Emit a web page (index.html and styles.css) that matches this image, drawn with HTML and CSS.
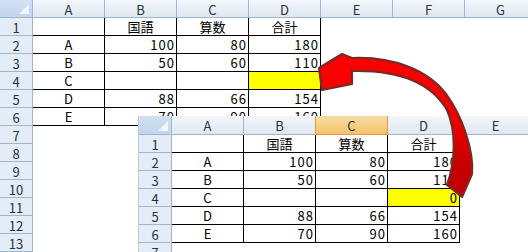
FILE: index.html
```html
<!DOCTYPE html>
<html lang="ja">
<head>
<meta charset="utf-8">
<link rel="stylesheet" href="styles.css">
</head>
<body>
<div class="desk">
  <div class="sheet sheet1">
    <div class="corner"></div>
    <div class="ch">A</div><div class="ch">B</div><div class="ch">C</div><div class="ch">D</div><div class="ch">E</div><div class="ch">F</div><div class="ch">G</div>

    <div class="rh">1</div>
    <div class="c b"></div><div class="c b ctr">国語</div><div class="c b ctr">算数</div><div class="c b ctr">合計</div><div class="c"></div><div class="c"></div><div class="c"></div>
    <div class="rh">2</div>
    <div class="c b ctr">A</div><div class="c b num">100</div><div class="c b num">80</div><div class="c b num">180</div><div class="c"></div><div class="c"></div><div class="c"></div>
    <div class="rh">3</div>
    <div class="c b ctr">B</div><div class="c b num">50</div><div class="c b num">60</div><div class="c b num">110</div><div class="c"></div><div class="c"></div><div class="c"></div>
    <div class="rh">4</div>
    <div class="c b ctr">C</div><div class="c b num"></div><div class="c b num"></div><div class="c b num y"></div><div class="c"></div><div class="c"></div><div class="c"></div>
    <div class="rh">5</div>
    <div class="c b ctr">D</div><div class="c b num">88</div><div class="c b num">66</div><div class="c b num">154</div><div class="c"></div><div class="c"></div><div class="c"></div>
    <div class="rh">6</div>
    <div class="c b ctr">E</div><div class="c b num">70</div><div class="c b num">90</div><div class="c b num">160</div><div class="c"></div><div class="c"></div><div class="c"></div>
    <div class="rh">7</div><div class="c blank"></div>
    <div class="rh">8</div><div class="c blank"></div>
    <div class="rh">9</div><div class="c blank"></div>
    <div class="rh">10</div><div class="c blank"></div>
    <div class="rh">11</div><div class="c blank"></div>
    <div class="rh">12</div><div class="c blank"></div>
    <div class="rh">13</div><div class="c blank"></div>
  </div>

  <div class="sheet sheet2">
    <div class="corner"></div>
    <div class="ch">A</div><div class="ch">B</div><div class="ch sel">C</div><div class="ch">D</div><div class="ch">E</div>

    <div class="rh">1</div>
    <div class="c b"></div><div class="c b ctr">国語</div><div class="c b ctr">算数</div><div class="c b ctr">合計</div><div class="c"></div>
    <div class="rh">2</div>
    <div class="c b ctr">A</div><div class="c b num">100</div><div class="c b num">80</div><div class="c b num">180</div><div class="c"></div>
    <div class="rh">3</div>
    <div class="c b ctr">B</div><div class="c b num">50</div><div class="c b num">60</div><div class="c b num">110</div><div class="c"></div>
    <div class="rh">4</div>
    <div class="c b ctr">C</div><div class="c b num"></div><div class="c b num"></div><div class="c b num y">0</div><div class="c"></div>
    <div class="rh">5</div>
    <div class="c b ctr">D</div><div class="c b num">88</div><div class="c b num">66</div><div class="c b num">154</div><div class="c"></div>
    <div class="rh">6</div>
    <div class="c b ctr">E</div><div class="c b num">70</div><div class="c b num">90</div><div class="c b num">160</div><div class="c"></div>
    <div class="rh">7</div><div class="c blank"></div>
  </div>

  <svg class="arrow" width="528" height="252" viewBox="0 0 528 252" aria-hidden="true">
    <defs>
      <linearGradient id="ag" x1="0" y1="0" x2="0" y2="1">
        <stop offset="0" stop-color="#ff0000"/>
        <stop offset="0.45" stop-color="#f00000"/>
        <stop offset="0.75" stop-color="#c80000"/>
        <stop offset="1" stop-color="#c00000"/>
      </linearGradient>
    </defs>
    <path d="M352 58 C392 56 428 70 446 94 C462 116 474 150 472 174 L462 197 L447 185 C456 160 456 130 447 110 C432 84 400 70 352 71 L352 84 L322 90 L319 68 L342 54 Z"
          fill="url(#ag)" stroke="#7a2a26" stroke-width="2.2" stroke-linejoin="round"/>
  </svg>
</div>
</body>
</html>
```

FILE: styles.css
```css
html, body {
  margin: 0;
  padding: 0;
  background: #ffffff;
}

.desk {
  position: relative;
  width: 528px;
  height: 252px;
  overflow: hidden;
  font-family: "Noto Sans CJK JP", "Noto Sans", sans-serif;
  font-size: 13px;
  color: #000;
}

.sheet {
  display: grid;
  background: #fff;
}

.sheet1 {
  grid-template-columns: 33px repeat(7, 72px);
  grid-template-rows: 18px repeat(13, 18px);
  width: 537px;
}

.sheet2 {
  position: absolute;
  left: 138px;
  top: 116px;
  grid-template-columns: 33px repeat(5, 72px);
  grid-template-rows: 19px repeat(7, 18px);
  width: 394px;
  border-left: 1px solid #b8c9dc;
  box-sizing: border-box;
}

.corner {
  position: relative;
  box-sizing: border-box;
  background: linear-gradient(#d2e0f2, #c2d5ee);
  border-right: 1px solid #9eb6ce;
  border-bottom: 1px solid #9eb6ce;
}

.corner::after {
  content: "";
  position: absolute;
  right: 3px;
  bottom: 3px;
  width: 0;
  height: 0;
  border-left: 10px solid transparent;
  border-bottom: 10px solid #f2f6fb;
}

.ch {
  box-sizing: border-box;
  background: linear-gradient(#f4f7fb, #dfe7f1);
  border-right: 1px solid #9eb6ce;
  border-bottom: 1px solid #9eb6ce;
  color: #26333e;
  display: flex;
  align-items: center;
  justify-content: center;
  line-height: 1;
  padding-top: 1px;
}

.ch.sel {
  background: linear-gradient(#f9dca4, #f2c46e);
  border-left: 1px solid #f29536;
  border-right: 1px solid #f29536;
  border-bottom: 1px solid #f29536;
  margin-left: -1px;
}

.rh {
  box-sizing: border-box;
  background: #e4ecf7;
  border-right: 1px solid #9eb6ce;
  border-bottom: 1px solid #9eb6ce;
  color: #26333e;
  text-align: center;
  line-height: 17px;
  padding-top: 1px;
}

.c {
  box-sizing: border-box;
  line-height: 17px;
  white-space: nowrap;
  overflow: hidden;
}

.c.blank {
  grid-column: 2 / -1;
}

.c.b {
  border-right: 1px solid #000;
  border-bottom: 1px solid #000;
}

.ctr {
  text-align: center;
}

.num {
  text-align: right;
  padding-right: 1px;
  letter-spacing: 1px;
}

.y {
  background: #ffff00;
}

.arrow {
  position: absolute;
  left: 0;
  top: 0;
}
```
